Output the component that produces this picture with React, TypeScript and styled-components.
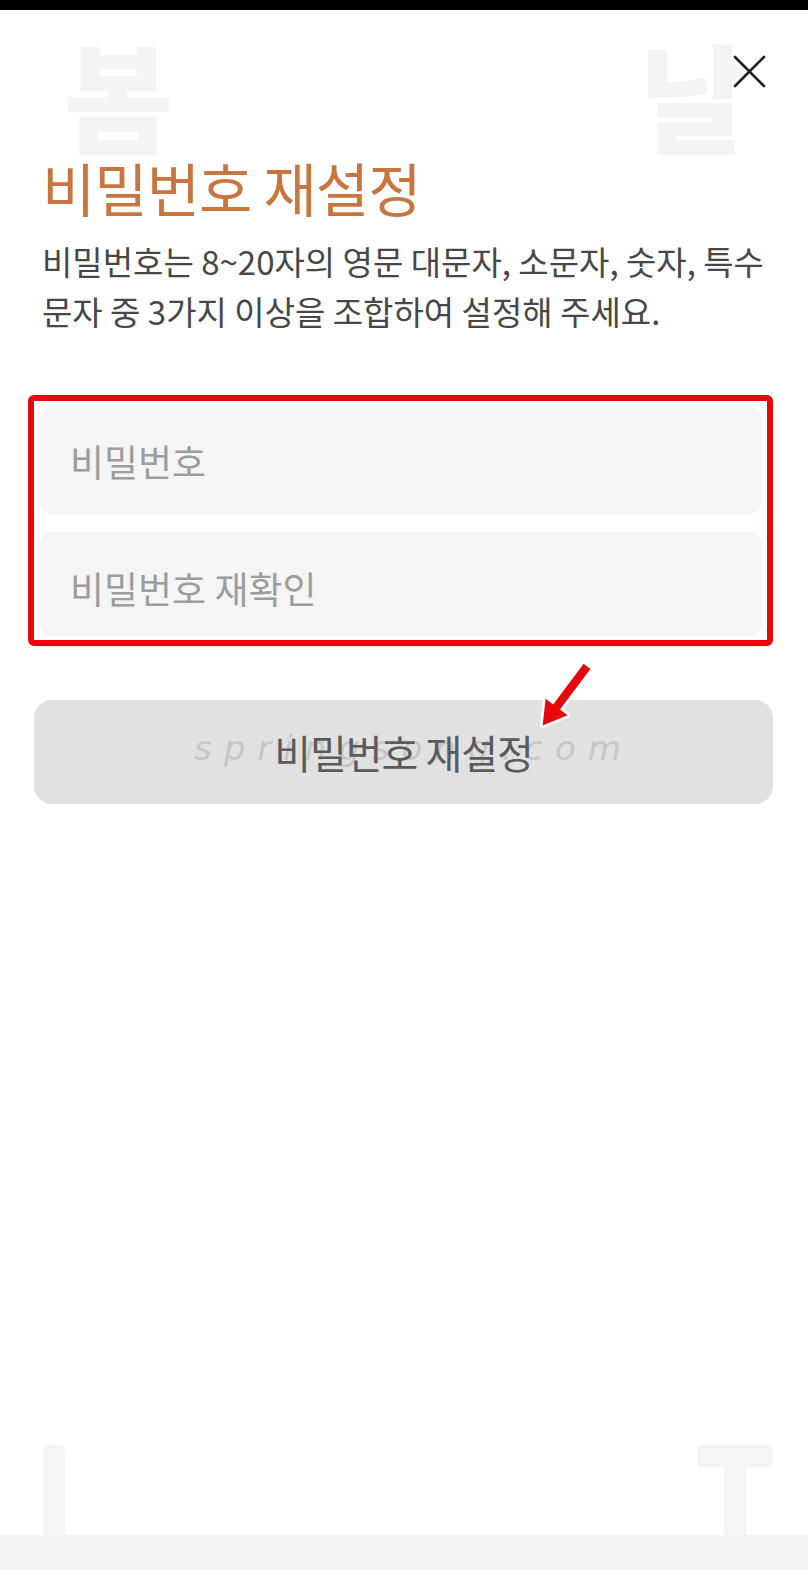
import React from "react";
import styled, { createGlobalStyle } from "styled-components";

const Global = createGlobalStyle`
  html, body { margin: 0; padding: 0; background: #ffffff; }
  body { font-family: "Noto Sans CJK KR", "Noto Sans", sans-serif; }
  * { box-sizing: border-box; }
`;

const Screen = styled.div`
  position: relative;
  width: 808px;
  min-height: 1570px;
  display: flex;
  flex-direction: column;
  background: #fff;
  overflow: hidden;
`;

const StatusBar = styled.div`
  height: 10px;
  background: #000;
  flex-shrink: 0;
`;

const Watermark = styled.span<{ $left: number; $top: number }>`
  position: absolute;
  left: ${(p) => p.$left}px;
  top: ${(p) => p.$top}px;
  height: 108px;
  font-family: "Noto Sans CJK KR", sans-serif;
  font-weight: 900;
  font-size: 118px;
  line-height: 108px;
  color: #f4f4f4;
  pointer-events: none;
  user-select: none;
`;

const BarMark = styled.div<{ $left: number }>`
  position: absolute;
  left: ${(p) => p.$left}px;
  bottom: 35px;
  width: 22px;
  height: 90px;
  background: #f5f5f5;
  border-radius: 6px 6px 0 0;
`;

const TeeMark = styled.div`
  position: absolute;
  left: 697px;
  bottom: 35px;
  width: 76px;
  height: 90px;
  display: flex;
  flex-direction: column;
  align-items: center;
  &::before {
    content: "";
    width: 76px;
    height: 22px;
    background: #f5f5f5;
    border-radius: 5px;
  }
  &::after {
    content: "";
    width: 22px;
    flex: 1;
    background: #f5f5f5;
  }
`;

const Content = styled.div`
  position: relative;
  padding: 0 42px;
  display: flex;
  flex-direction: column;
`;

const CloseRow = styled.div`
  height: 142px;
  padding-top: 45px;
  display: flex;
  justify-content: flex-end;
  align-items: flex-start;
`;

const CloseButton = styled.button`
  width: 33px;
  height: 33px;
  padding: 0;
  border: none;
  background: transparent;
  display: flex;
  align-items: center;
  justify-content: center;
  cursor: pointer;
`;

const Title = styled.h1`
  margin: 0;
  font-size: 58px;
  line-height: 70px;
  font-weight: 400;
  color: #c9753f;
  letter-spacing: -1px;
`;

const Description = styled.p`
  margin: 14px 0 0;
  font-size: 33px;
  line-height: 50px;
  font-weight: 400;
  color: #474747;
  letter-spacing: 0;
  white-space: nowrap;
`;

const Highlight = styled.div`
  margin: 59px -7px 0 -14px;
  border: 6px solid #e8070b;
  border-radius: 6px;
  padding: 6px 5px 4px 6px;
  display: flex;
  flex-direction: column;
  gap: 18px;
`;

const Field = styled.input<{ $h: number; $shift: number }>`
  height: ${(p) => p.$h}px;
  width: 100%;
  border: none;
  outline: none;
  background: #f5f5f5;
  border-radius: 12px;
  padding: ${(p) => p.$shift}px 30px 0;
  font-family: "Noto Sans CJK KR", sans-serif;
  font-size: 37px;
  color: #333;
  letter-spacing: 0;
  &::placeholder {
    color: #9d9d9d;
  }
`;

const ArrowMark = styled.svg`
  position: absolute;
  left: 536px;
  top: 650px;
  overflow: visible;
  z-index: 2;
`;

const SubmitButton = styled.button`
  position: relative;
  margin: 54px -7px 0 -8px;
  height: 104px;
  border: none;
  border-radius: 18px;
  background: #e1e1e1;
  font-family: "Noto Sans CJK KR", sans-serif;
  font-size: 40px;
  color: #5b5b5b;
  letter-spacing: -1px;
  display: flex;
  align-items: center;
  justify-content: center;
`;

const ButtonLabel = styled.span`
  position: relative;
  z-index: 1;
`;

const BlogMark = styled.span`
  position: absolute;
  left: 160px;
  top: 28px;
  font-family: "DejaVu Sans", sans-serif;
  font-style: italic;
  font-weight: 300;
  font-size: 34px;
  letter-spacing: 12px;
  color: rgba(150, 150, 150, 0.35);
  pointer-events: none;
`;

const Spacer = styled.div`
  flex: 1;
`;

const NavBand = styled.div`
  height: 35px;
  background: #f4f4f4;
  flex-shrink: 0;
`;

export default function App() {
  return (
    <>
      <Global />
      <Screen>
        <StatusBar />
        <Watermark $left={64} $top={40}>봄</Watermark>
        <Watermark $left={640} $top={40}>날</Watermark>
        <BarMark $left={43} />
        <TeeMark />
        <Content>
          <CloseRow>
            <CloseButton aria-label="닫기">
              <svg width="33" height="33" viewBox="0 0 33 33">
                <path d="M2 2 L31 31 M31 2 L2 31" stroke="#1e1e1e" strokeWidth="2.6" strokeLinecap="round" />
              </svg>
            </CloseButton>
          </CloseRow>
          <Title>비밀번호 재설정</Title>
          <Description>
            비밀번호는 8~20자의 영문 대문자, 소문자, 숫자, 특수
            <br />
            문자 중 3가지 이상을 조합하여 설정해 주세요.
          </Description>
          <Highlight>
            <Field $h={107} $shift={0} type="password" placeholder="비밀번호" />
            <Field $h={104} $shift={8} type="password" placeholder="비밀번호 재확인" />
          </Highlight>
          <ArrowMark width="64" height="74" viewBox="0 0 60 70">
            <polygon
              points="44.8,3.6 51.2,8.4 22.4,46.8 29.6,52.2 6,62 8.8,36.6 16,42"
              fill="#e8070b"
              stroke="#ffffff"
              strokeWidth="5"
              strokeLinejoin="round"
              paintOrder="stroke"
            />
          </ArrowMark>
          <SubmitButton>
            <BlogMark>springsong.com</BlogMark>
            <ButtonLabel>비밀번호 재설정</ButtonLabel>
          </SubmitButton>
        </Content>
        <Spacer />
        <NavBand />
      </Screen>
    </>
  );
}
